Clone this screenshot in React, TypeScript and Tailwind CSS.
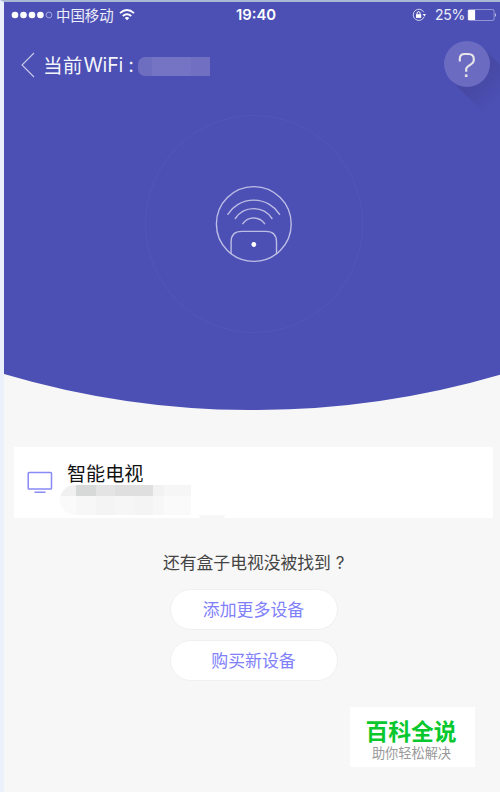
import React from 'react';

function StatusBar() {
  return (
    <div className="flex h-[26px] shrink-0 items-center text-white/90">
      <svg className="ml-[6px] shrink-0" width="44" height="10" viewBox="0 0 44 10">
        <g fill="#fff">
          <circle cx="5" cy="5" r="3.3" />
          <circle cx="13.5" cy="5" r="3.3" />
          <circle cx="22" cy="5" r="3.3" />
          <circle cx="30.4" cy="5" r="3.3" />
        </g>
        <circle cx="39" cy="5" r="2.9" fill="none" stroke="#fff" strokeOpacity=".6" strokeWidth=".8" />
      </svg>
      <span className="ml-[2px] w-[60px] pb-px text-[14.4px] leading-[20px] whitespace-nowrap">中国移动</span>
      <svg className="ml-[3px] shrink-0" width="16" height="12" viewBox="0 0 16 12" fill="none" stroke="#fff" strokeWidth="1.9">
        <path d="M1 4.1 Q8 -1.9 15 4.1" />
        <path d="M3.8 6.9 Q8 3.5 12.2 6.9" />
        <path d="M8 11.3 L5.7 8.9 Q8 7.3 10.3 8.9 Z" fill="#fff" stroke="none" />
      </svg>
      <span className="ml-[101px] w-[42px] font-[Inter,sans-serif] text-[14.8px] font-semibold leading-[20px] text-white">19:40</span>
      <svg className="ml-[134px] shrink-0" width="14" height="14" viewBox="0 0 14 14" fill="none" stroke="#fff">
        <path d="M12.1 8.8 A5.6 5.6 0 1 1 11.8 4.2" strokeWidth=".9" opacity=".8" />
        <path d="M10.6 5.9 L14 5.9 L12.5 8.5 Z" fill="#fff" stroke="none" />
        <path d="M5.1 6.5 V5.2 A1.5 1.5 0 0 1 8.1 5.2 V6.5" strokeWidth="1" />
        <rect x="4" y="6.2" width="5.2" height="3.7" fill="#fff" stroke="none" />
      </svg>
      <span className="ml-[9px] w-[30px] font-[Inter,sans-serif] text-[14px] leading-[20px] tracking-[-0.3px] whitespace-nowrap">25%</span>
      <svg className="ml-[2px] shrink-0" width="30" height="14" viewBox="0 0 30 14">
        <rect x="1.1" y="1.5" width="26" height="11" rx="1.5" fill="none" stroke="#fff" strokeOpacity=".4" />
        <rect x="1.1" y="2" width="7" height="10" fill="#fff" />
        <path d="M28 5 Q30 7 28 9 Z" fill="#fff" opacity=".7" />
      </svg>
    </div>
  );
}

function TitleBar() {
  return (
    <div className="flex h-[92px] shrink-0 items-start">
      <svg className="mt-[24px] ml-[17px] shrink-0" width="15" height="26" viewBox="0 0 15 26" fill="none" stroke="#fff" strokeOpacity=".7">
        <path d="M13 1 L1 13 L13 25" strokeWidth="1.1" />
      </svg>
      <h1 className="mt-[25px] ml-[7px] flex h-[24px] w-[95px] items-center text-[19.7px] leading-[24px] whitespace-nowrap text-white/95">
        <span>当前</span>
        <span className="ml-px font-[Inter,sans-serif] text-[19.7px] tracking-[-0.2px]">WiFi</span>
        <span className="ml-[5px] font-[Inter,sans-serif]">:</span>
      </h1>
      <div className="mt-[29px] flex h-[19px] w-[72px] overflow-hidden rounded-l-[7px]">
        <div className="w-[14px] bg-[#6e6ec0]" />
        <div className="w-[39px] bg-[#7473c4]" />
        <div className="flex-1 bg-[#706fc1]" />
      </div>
      <svg className="mt-[12px] ml-auto shrink-0" width="58" height="80" viewBox="0 0 58 80">
        <defs>
          <linearGradient id="helpShadow" x1="38" y1="37" x2="60" y2="59" gradientUnits="userSpaceOnUse">
            <stop offset="0" stopColor="#4849a4" />
            <stop offset="1" stopColor="#4c50b5" />
          </linearGradient>
        </defs>
        <path d="M8.7 40.3 L45 76.6 L58 64 V24.4 L41.3 7.7 Z" fill="url(#helpShadow)" />
        <circle cx="25" cy="24" r="23" fill="#6a6bc1" />
        <path d="M17.8 21.5 V18.7 Q17.8 14 22.6 14 H26.3 Q31.8 14 31.8 19 V20.2 Q31.8 22.5 28.9 24.4 Q24.2 27.2 24.2 29.1 V31.7" fill="none" stroke="#e6e4e8" strokeWidth="2.2" />
        <rect x="22.9" y="34.4" width="2.6" height="2.6" fill="#e6e4e8" />
      </svg>
    </div>
  );
}

function Radar() {
  return (
    <svg className="ml-[139px] shrink-0" width="222" height="222" viewBox="0 0 222 222" fill="none">
      <circle cx="111" cy="111" r="108.5" stroke="#5256b8" />
      <g transform="translate(110.8 111)" stroke="#bcbce5" strokeWidth="1.4" strokeLinecap="round">
        <circle r="37.4" />
        <path d="M-26 -9.7 A30.8 30.8 0 0 1 25.8 -9.7" />
        <path d="M-18.5 -5.5 A22 22 0 0 1 18.2 -5.5" />
        <path d="M-11 -.3 A13.2 13.2 0 0 1 10.8 -.3" />
        <path d="M-22.7 29.5 V18 Q-22.7 7.4 -12 7.4 H12 Q22.7 7.4 22.7 18 V29.5" />
        <circle cx="0" cy="20.5" r="2.4" fill="#fff" stroke="none" />
      </g>
    </svg>
  );
}

function DeviceCard() {
  return (
    <section className="mt-[37px] mr-[7px] ml-[10px] flex h-[71px] shrink-0 bg-white">
      <svg className="mt-[24px] ml-[13px] shrink-0" width="26" height="24" viewBox="0 0 26 24" fill="none" stroke="#8989f7">
        <rect x="1.2" y="1.4" width="23.3" height="16.7" rx=".8" strokeWidth="1.5" />
        <path d="M8 21.3 H18" strokeWidth="1.4" strokeLinecap="round" />
      </svg>
      <div className="ml-[7px] flex flex-col">
        <h2 className="mt-[14px] ml-[7px] h-[24px] text-[19.1px] leading-[24px] whitespace-nowrap text-[#111]">智能电视</h2>
        <div className="flex h-[30px] w-[131px] flex-col overflow-hidden rounded-l-[15px]">
          <div className="flex h-[11px]">
            <div className="w-[16px] bg-[#f0f0f0]" />
            <div className="w-[20px] bg-[#d7d8d8]" />
            <div className="w-[19px] bg-[#e4e4e4]" />
            <div className="w-[38px] bg-[#dfdfdf]" />
            <div className="w-[11px] bg-[#f2f2f2]" />
            <div className="flex-1 bg-[#f6f6f6]" />
          </div>
          <div className="flex h-[19px]">
            <div className="w-[16px] bg-[#fafafa]" />
            <div className="w-[20px] bg-[#f7f7f7]" />
            <div className="w-[19px] bg-[#f4f4f4]" />
            <div className="w-[20px] bg-[#f6f6f6]" />
            <div className="w-[18px] bg-[#f4f4f4]" />
            <div className="w-[11px] bg-[#f7f7f7]" />
            <div className="flex-1 bg-[#fafafa]" />
          </div>
        </div>
      </div>
      <div className="mt-[68px] ml-[8px] h-[3px] w-[26px] rounded-b-full bg-[#f7f7f7]" />
    </section>
  );
}

function PillButton({ label }: { label: string }) {
  return (
    <button className="flex h-[41px] w-[168px] shrink-0 items-center justify-center rounded-full border border-[#f0f0f1] bg-white pb-px text-[16.9px] leading-[24px] text-[#8080fa]">
      {label}
    </button>
  );
}

export default function App() {
  return (
    <div className="flex h-[792px] w-[500px] flex-col overflow-hidden border-t-2 border-l-4 border-t-[#a9b8d5] border-l-[#eaf1fa] bg-[#f7f7f7] font-['Noto_Sans_CJK_SC',sans-serif]">
      <header className="flex h-[371px] shrink-0 flex-col bg-[#4c50b5]">
        <StatusBar />
        <TitleBar />
        <div className="-mt-[7px] flex">
          <Radar />
        </div>
      </header>
      <svg className="shrink-0" width="496" height="37" viewBox="0 0 496 37">
        <path d="M0 0 H496 V1.7 A879 879 0 0 1 0 .9 Z" fill="#4c50b5" />
      </svg>
      <DeviceCard />
      <main className="mt-[32px] flex shrink-0 flex-col items-center pl-[3px]">
        <p className="ml-px h-[24px] w-[182px] text-[16.8px] leading-[24px] whitespace-nowrap text-[#444]">
          还有盒子电视没被找到<span className="ml-[5px] font-[Inter,sans-serif] text-[17px]">?</span>
        </p>
        <div className="mt-[15px] flex flex-col gap-[10px]">
          <PillButton label="添加更多设备" />
          <PillButton label="购买新设备" />
        </div>
      </main>
      <aside className="mt-[26px] mr-[25px] flex h-[60px] w-[125px] shrink-0 flex-col items-center self-end bg-white">
        <strong className="mt-[10px] mr-[3px] h-[28px] text-[22.8px] leading-[28px] font-bold whitespace-nowrap text-[#08c82e]">百科全说</strong>
        <span className="mr-[2px] h-[16px] text-[13.2px] leading-[16px] whitespace-nowrap text-[#999]">助你轻松解决</span>
      </aside>
    </div>
  );
}
